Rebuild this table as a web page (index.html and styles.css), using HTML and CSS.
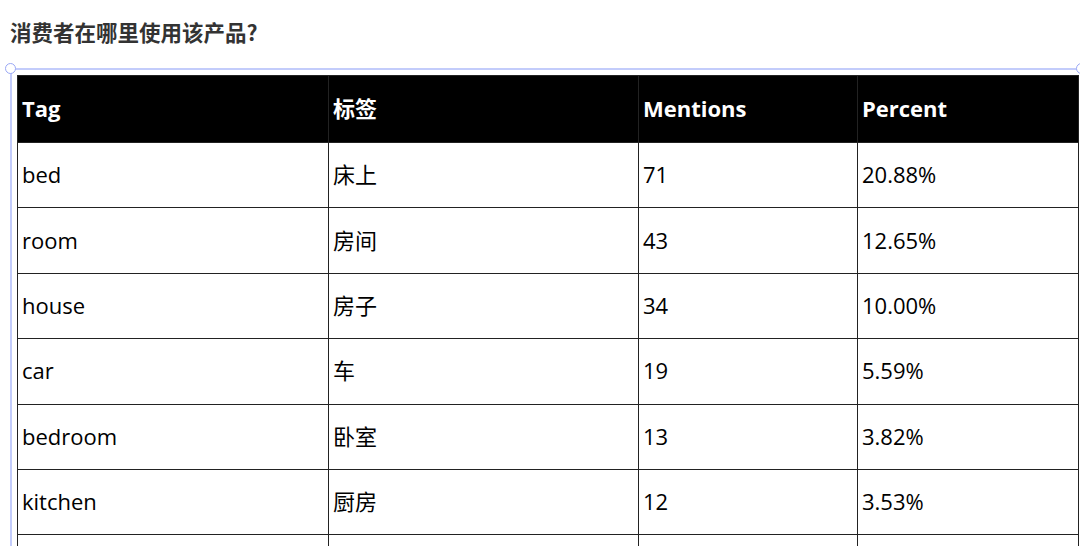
FILE: index.html
```html
<!DOCTYPE html>
<html lang="zh">
<head>
<meta charset="utf-8">
<link rel="stylesheet" href="styles.css">
</head>
<body>
<h1 class="title">消费者在哪里使用该产品?</h1>
<div class="frame">
  <span class="handle handle-left"></span>
  <span class="handle handle-right"></span>
  <table class="data">
    <colgroup>
      <col class="c1"><col class="c2"><col class="c3"><col class="c4">
    </colgroup>
    <thead>
      <tr><th>Tag</th><th>标签</th><th>Mentions</th><th>Percent</th></tr>
    </thead>
    <tbody>
      <tr><td>bed</td><td>床上</td><td>71</td><td>20.88%</td></tr>
      <tr><td>room</td><td>房间</td><td>43</td><td>12.65%</td></tr>
      <tr><td>house</td><td>房子</td><td>34</td><td>10.00%</td></tr>
      <tr><td>car</td><td>车</td><td>19</td><td>5.59%</td></tr>
      <tr><td>bedroom</td><td>卧室</td><td>13</td><td>3.82%</td></tr>
      <tr><td>kitchen</td><td>厨房</td><td>12</td><td>3.53%</td></tr>
      <tr><td></td><td></td><td></td><td></td></tr>
    </tbody>
  </table>
</div>
</body>
</html>
```

FILE: styles.css
```css
html, body {
  margin: 0;
  padding: 0;
  background: #fff;
  overflow: hidden;
}
body {
  font-family: "Open Sans", "Noto Sans CJK SC", sans-serif;
  color: #000;
}
.title {
  margin: 0;
  padding: 19px 0 0 10px;
  height: 49px;
  box-sizing: border-box;
  font-family: "Noto Sans CJK SC", sans-serif;
  font-size: 21.5px;
  line-height: 26px;
  font-weight: 700;
  color: #333;
}
.frame {
  position: relative;
  margin-left: 10px;
  margin-top: 19px;
  border-top: 2px solid #c3ccfb;
  border-left: 2px solid #c3ccfb;
  padding: 5px 0 0 5px;
}
.handle {
  position: absolute;
  top: -7px;
  width: 9px;
  height: 9px;
  border: 1.5px solid #9aa8f5;
  border-radius: 50%;
  background: #fff;
}
.handle-left { left: -7px; }
.handle-right { left: 1064px; }
.data {
  border-collapse: collapse;
  width: 1061px;
  table-layout: fixed;
}
.c1 { width: 311px; }
.c2 { width: 310px; }
.c3 { width: 219px; }
.c4 { width: 221px; }
.data th, .data td {
  border: 1.5px solid #222;
  text-align: left;
  padding: 0 0 2px 4px;
  font-size: 22px;
  line-height: 28px;
  height: 65.4px;
  box-sizing: border-box;
}
.data th {
  background: #000;
  color: #fff;
  font-weight: 700;
  height: 67px;
}
```
